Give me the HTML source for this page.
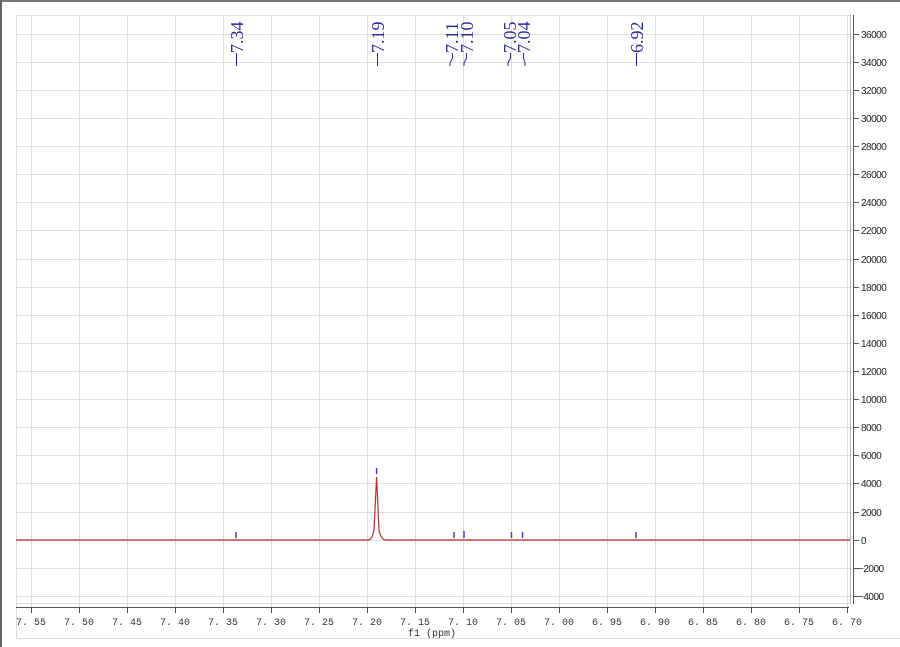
<!DOCTYPE html>
<html><head><meta charset="utf-8"><style>
html,body{margin:0;padding:0;background:#fff;}
svg{display:block;}
.xl{font-family:"Liberation Mono",monospace;font-size:10px;fill:#333;}
.yl{font-family:"Liberation Sans",sans-serif;font-size:10px;fill:#222;letter-spacing:-0.5px;}
.pk{font-family:"Liberation Serif",serif;font-size:18px;fill:#2b2b9b;}
</style></head><body>
<svg width="900" height="647" viewBox="0 0 900 647" xmlns="http://www.w3.org/2000/svg">
<rect x="0" y="0" width="900" height="647" fill="#fff"/>
<rect x="0" y="0" width="900" height="2" fill="#777"/>
<rect x="0" y="0" width="2" height="647" fill="#666"/>
<g stroke="#ddd" stroke-width="1">
<line x1="16.5" y1="15" x2="16.5" y2="638"/>
<line x1="16" y1="638.5" x2="900" y2="638.5"/>
<line x1="16" y1="15.5" x2="851" y2="15.5"/>
<line x1="16" y1="603.5" x2="851" y2="603.5"/>
<line x1="16" y1="34.5" x2="851" y2="34.5"/><line x1="16" y1="62.5" x2="851" y2="62.5"/><line x1="16" y1="90.5" x2="851" y2="90.5"/><line x1="16" y1="118.5" x2="851" y2="118.5"/><line x1="16" y1="146.5" x2="851" y2="146.5"/><line x1="16" y1="174.5" x2="851" y2="174.5"/><line x1="16" y1="202.5" x2="851" y2="202.5"/><line x1="16" y1="230.5" x2="851" y2="230.5"/><line x1="16" y1="259.5" x2="851" y2="259.5"/><line x1="16" y1="287.5" x2="851" y2="287.5"/><line x1="16" y1="315.5" x2="851" y2="315.5"/><line x1="16" y1="343.5" x2="851" y2="343.5"/><line x1="16" y1="371.5" x2="851" y2="371.5"/><line x1="16" y1="399.5" x2="851" y2="399.5"/><line x1="16" y1="427.5" x2="851" y2="427.5"/><line x1="16" y1="455.5" x2="851" y2="455.5"/><line x1="16" y1="483.5" x2="851" y2="483.5"/><line x1="16" y1="512.5" x2="851" y2="512.5"/><line x1="16" y1="540.5" x2="851" y2="540.5"/><line x1="16" y1="568.5" x2="851" y2="568.5"/><line x1="16" y1="596.5" x2="851" y2="596.5"/>
<line x1="31.5" y1="15" x2="31.5" y2="607"/><line x1="79.5" y1="15" x2="79.5" y2="607"/><line x1="127.5" y1="15" x2="127.5" y2="607"/><line x1="175.5" y1="15" x2="175.5" y2="607"/><line x1="223.5" y1="15" x2="223.5" y2="607"/><line x1="271.5" y1="15" x2="271.5" y2="607"/><line x1="319.5" y1="15" x2="319.5" y2="607"/><line x1="367.5" y1="15" x2="367.5" y2="607"/><line x1="415.5" y1="15" x2="415.5" y2="607"/><line x1="463.5" y1="15" x2="463.5" y2="607"/><line x1="511.5" y1="15" x2="511.5" y2="607"/><line x1="559.5" y1="15" x2="559.5" y2="607"/><line x1="607.5" y1="15" x2="607.5" y2="607"/><line x1="655.5" y1="15" x2="655.5" y2="607"/><line x1="703.5" y1="15" x2="703.5" y2="607"/><line x1="751.5" y1="15" x2="751.5" y2="607"/><line x1="799.5" y1="15" x2="799.5" y2="607"/><line x1="847.5" y1="15" x2="847.5" y2="607"/>
</g>
<!-- right axis -->
<g stroke="#555" stroke-width="1">
<line x1="853.5" y1="15" x2="853.5" y2="604"/>
<line x1="850.5" y1="15" x2="850.5" y2="604" stroke="#bbb"/>
<line x1="853" y1="34.5" x2="859" y2="34.5"/><line x1="853" y1="62.5" x2="859" y2="62.5"/><line x1="853" y1="90.5" x2="859" y2="90.5"/><line x1="853" y1="118.5" x2="859" y2="118.5"/><line x1="853" y1="146.5" x2="859" y2="146.5"/><line x1="853" y1="174.5" x2="859" y2="174.5"/><line x1="853" y1="202.5" x2="859" y2="202.5"/><line x1="853" y1="230.5" x2="859" y2="230.5"/><line x1="853" y1="259.5" x2="859" y2="259.5"/><line x1="853" y1="287.5" x2="859" y2="287.5"/><line x1="853" y1="315.5" x2="859" y2="315.5"/><line x1="853" y1="343.5" x2="859" y2="343.5"/><line x1="853" y1="371.5" x2="859" y2="371.5"/><line x1="853" y1="399.5" x2="859" y2="399.5"/><line x1="853" y1="427.5" x2="859" y2="427.5"/><line x1="853" y1="455.5" x2="859" y2="455.5"/><line x1="853" y1="483.5" x2="859" y2="483.5"/><line x1="853" y1="512.5" x2="859" y2="512.5"/><line x1="853" y1="540.5" x2="859" y2="540.5"/><line x1="853" y1="568.5" x2="859" y2="568.5"/><line x1="853" y1="596.5" x2="859" y2="596.5"/>
<!-- bottom axis -->
<line x1="16" y1="607.5" x2="849" y2="607.5"/>
<line x1="31.5" y1="607" x2="31.5" y2="613"/><line x1="79.5" y1="607" x2="79.5" y2="613"/><line x1="127.5" y1="607" x2="127.5" y2="613"/><line x1="175.5" y1="607" x2="175.5" y2="613"/><line x1="223.5" y1="607" x2="223.5" y2="613"/><line x1="271.5" y1="607" x2="271.5" y2="613"/><line x1="319.5" y1="607" x2="319.5" y2="613"/><line x1="367.5" y1="607" x2="367.5" y2="613"/><line x1="415.5" y1="607" x2="415.5" y2="613"/><line x1="463.5" y1="607" x2="463.5" y2="613"/><line x1="511.5" y1="607" x2="511.5" y2="613"/><line x1="559.5" y1="607" x2="559.5" y2="613"/><line x1="607.5" y1="607" x2="607.5" y2="613"/><line x1="655.5" y1="607" x2="655.5" y2="613"/><line x1="703.5" y1="607" x2="703.5" y2="613"/><line x1="751.5" y1="607" x2="751.5" y2="613"/><line x1="799.5" y1="607" x2="799.5" y2="613"/><line x1="847.5" y1="607" x2="847.5" y2="613"/>
</g>
<g class="yl">
<text x="861" y="38">36000</text><text x="861" y="66">34000</text><text x="861" y="94">32000</text><text x="861" y="122">30000</text><text x="861" y="150">28000</text><text x="861" y="178">26000</text><text x="861" y="206">24000</text><text x="861" y="234">22000</text><text x="861" y="263">20000</text><text x="861" y="291">18000</text><text x="861" y="319">16000</text><text x="861" y="347">14000</text><text x="861" y="375">12000</text><text x="861" y="403">10000</text><text x="861" y="431">8000</text><text x="861" y="459">6000</text><text x="861" y="487">4000</text><text x="861" y="516">2000</text><text x="861" y="544">0</text><text x="858" y="572">−2000</text><text x="858" y="600">−4000</text>
</g>
<g class="xl" text-anchor="middle">
<text x="31" y="625">7. 55</text><text x="79" y="625">7. 50</text><text x="127" y="625">7. 45</text><text x="175" y="625">7. 40</text><text x="223" y="625">7. 35</text><text x="271" y="625">7. 30</text><text x="319" y="625">7. 25</text><text x="367" y="625">7. 20</text><text x="415" y="625">7. 15</text><text x="463" y="625">7. 10</text><text x="511" y="625">7. 05</text><text x="559" y="625">7. 00</text><text x="607" y="625">6. 95</text><text x="655" y="625">6. 90</text><text x="703" y="625">6. 85</text><text x="751" y="625">6. 80</text><text x="799" y="625">6. 75</text><text x="847" y="625">6. 70</text>
<text x="432" y="636">f1 (ppm)</text>
</g>
<!-- spectrum -->
<path d="M16 540 L368 540 Q372 540 374 530 L376.6 477 L379 530 Q381 540 386 540 L850 540" fill="none" stroke="#b03030" stroke-width="1.2"/>
<g stroke="#4040c0" stroke-width="1.5">
<line x1="236" y1="532" x2="236" y2="538"/>
<line x1="376.6" y1="468" x2="376.6" y2="474"/>
<line x1="454" y1="532" x2="454" y2="538"/>
<line x1="464" y1="531" x2="464" y2="538"/>
<line x1="511.5" y1="532" x2="511.5" y2="538"/>
<line x1="522.5" y1="532" x2="522.5" y2="538"/>
<line x1="636" y1="532" x2="636" y2="538"/>
</g>
<!-- peak labels -->
<g stroke="#2b2b9b" stroke-width="1" fill="none">
<path d="M236.5 53 V66"/>
<path d="M377.5 53 V66"/>
<path d="M452.5 53 V58 L450 63 V66"/>
<path d="M466.5 53 V58 L464 63 V66"/>
<path d="M510.5 53 V58 L508 63 V66"/>
<path d="M523.5 53 V58 L525 63 V66"/>
<path d="M636.5 53 V66"/>
</g>
<g class="pk">
<text transform="translate(243,53) rotate(-90)">7.34</text>
<text transform="translate(384,53) rotate(-90)">7.19</text>
<text transform="translate(458,53) rotate(-90)">7.11</text>
<text transform="translate(473,53) rotate(-90)">7.10</text>
<text transform="translate(516,53) rotate(-90)">7.05</text>
<text transform="translate(530,53) rotate(-90)">7.04</text>
<text transform="translate(643,53) rotate(-90)">6.92</text>
</g>
</svg>
</body></html>
